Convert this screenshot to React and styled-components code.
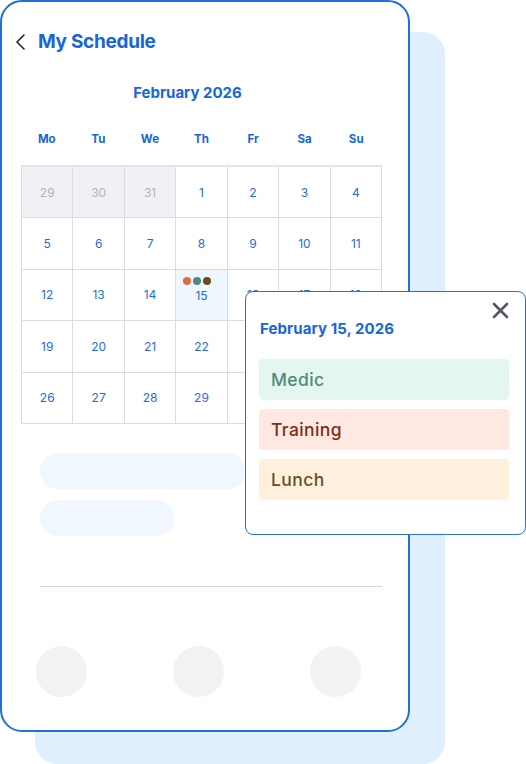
import React from "react";
import styled, { createGlobalStyle } from "styled-components";

const Global = createGlobalStyle`
  html, body { margin: 0; padding: 0; background: #ffffff; }
  body { font-family: Inter, "Open Sans", Arial, sans-serif; }
  * { box-sizing: border-box; }
`;

const BLUE = "#1766d9";

const Stage = styled.div`
  position: relative;
  width: 526px;
  height: 764px;
  overflow: hidden;
`;

const BackCard = styled.div`
  position: absolute;
  left: 35px;
  top: 32px;
  width: 410px;
  height: 732px;
  border-radius: 22px;
  background: #e0effd;
`;

const Phone = styled.div`
  position: relative;
  z-index: 1;
  width: 410px;
  height: 732px;
  border: 2px solid #1f6fe0;
  border-radius: 22px;
  background: #ffffff;
  display: flex;
  flex-direction: column;
  padding: 28px 26px 0 19px;
`;

const Header = styled.div`
  display: flex;
  align-items: center;
  gap: 10px;
  height: 24px;
  margin-left: -7px;
`;

const Title = styled.h1`
  margin: 0;
  font-size: 19px;
  line-height: 24px;
  font-weight: 700;
  color: ${BLUE};
  letter-spacing: -0.3px;
`;

const Month = styled.div`
  margin-top: 29px;
  padding-right: 28px;
  text-align: center;
  font-size: 15px;
  line-height: 20px;
  font-weight: 700;
  color: ${BLUE};
`;

const WeekRow = styled.div`
  margin-top: 29px;
  display: grid;
  grid-template-columns: repeat(7, 1fr);
  width: 361px;
`;

const WeekDay = styled.div`
  text-align: center;
  font-size: 11.5px;
  line-height: 14px;
  font-weight: 700;
  color: ${BLUE};
`;

const Grid = styled.div`
  margin-top: 19px;
  width: 361px;
  display: grid;
  grid-template-columns: repeat(7, 1fr);
  grid-auto-rows: 50.4px;
  gap: 1px;
  background: #dcdbe3;
  border: 1px solid #dcdbe3;
  border-top-width: 2px;
  border-top-color: #e4e4ea;
`;

const Cell = styled.div`
  position: relative;
  display: flex;
  align-items: center;
  justify-content: center;
  font-size: 12px;
  color: ${(p) => (p.$muted ? "#b3b3b8" : "#1f6bd8")};
  background: ${(p) => (p.$muted ? "#f0f1f5" : p.$active ? "#eef6fe" : "#ffffff")};
  padding-top: ${(p) => (p.$active ? "2px" : "0")};
`;

const Dots = styled.div`
  position: absolute;
  top: 7px;
  left: 50%;
  transform: translateX(calc(-50% - 4px));
  display: flex;
  gap: 2px;
`;

const Dot = styled.span`
  width: 8px;
  height: 8px;
  border-radius: 50%;
  background: ${(p) => p.$c};
`;

const Bar = styled.div`
  margin-left: 19px;
  width: ${(p) => p.$w}px;
  height: 36px;
  border-radius: 18px;
  background: #f0f7fe;
  margin-top: ${(p) => p.$mt}px;
`;

const Divider = styled.div`
  margin: 50px 0 0 19px;
  width: 342px;
  height: 1px;
  background: #d8d8d8;
`;

const CircleRow = styled.div`
  margin: 59px 0 0 15px;
  width: 325px;
  display: flex;
  justify-content: space-between;
`;

const Circle = styled.div`
  width: 51px;
  height: 51px;
  border-radius: 50%;
  background: #f2f2f2;
`;

const Popup = styled.div`
  position: absolute;
  z-index: 2;
  left: 245px;
  top: 291px;
  width: 281px;
  height: 244px;
  background: #ffffff;
  border: 1px solid #2a6fd6;
  border-radius: 8px;
  padding: 28px 16px 0 13px;
  display: flex;
  flex-direction: column;
`;

const Close = styled.button`
  position: absolute;
  top: 10px;
  right: 16px;
  width: 17px;
  height: 17px;
  padding: 0;
  border: 0;
  background: none;
  display: flex;
  align-items: center;
  justify-content: center;
`;

const PopTitle = styled.div`
  margin-left: 1px;
  font-size: 15px;
  line-height: 18px;
  font-weight: 700;
  color: ${BLUE};
  letter-spacing: 0.1px;
`;

const Events = styled.div`
  margin-top: 21px;
  display: flex;
  flex-direction: column;
  gap: 9px;
`;

const Event = styled.div`
  height: 41px;
  border-radius: 4px;
  background: ${(p) => p.$bg};
  color: ${(p) => p.$fg};
  display: flex;
  align-items: center;
  padding-left: 12px;
  font-size: 17.5px;
  font-weight: 500;
  letter-spacing: 0.4px;
`;

const weekdays = ["Mo", "Tu", "We", "Th", "Fr", "Sa", "Su"];
const days = [
  { d: 29, m: true }, { d: 30, m: true }, { d: 31, m: true },
  ...Array.from({ length: 29 }, (_, i) => ({ d: i + 1 })),
];

export default function App() {
  return (
    <>
      <Global />
      <Stage>
        <BackCard />
        <Phone>
          <Header>
            <svg width="14" height="20" viewBox="0 0 14 20">
              <path d="M10 3 L3 10 L10 17" fill="none" stroke="#1f2430" strokeWidth="1.6" strokeLinecap="round" strokeLinejoin="round" />
            </svg>
            <Title>My Schedule</Title>
          </Header>
          <Month>February 2026</Month>
          <WeekRow>
            {weekdays.map((w) => (
              <WeekDay key={w}>{w}</WeekDay>
            ))}
          </WeekRow>
          <Grid>
            {days.map((x, i) => (
              <Cell key={i} $muted={x.m} $active={!x.m && x.d === 15}>
                {!x.m && x.d === 15 && (
                  <Dots>
                    <Dot $c="#e06a43" />
                    <Dot $c="#4d8a7c" />
                    <Dot $c="#6b4c22" />
                  </Dots>
                )}
                {x.d}
              </Cell>
            ))}
            {[0, 1, 2].map((i) => (
              <Cell key={"e" + i} />
            ))}
          </Grid>
          <Bar $w={205} $mt={29} />
          <Bar $w={134} $mt={11} />
          <Divider />
          <CircleRow>
            <Circle />
            <Circle />
            <Circle />
          </CircleRow>
        </Phone>
        <Popup>
          <Close aria-label="close">
            <svg width="17" height="17" viewBox="0 0 17 17">
              <path d="M2 2 L15 15 M15 2 L2 15" stroke="#585466" strokeWidth="2.6" strokeLinecap="round" />
            </svg>
          </Close>
          <PopTitle>February 15, 2026</PopTitle>
          <Events>
            <Event $bg="#e3f7f0" $fg="#4e8a78">Medic</Event>
            <Event $bg="#fee8e1" $fg="#7a2e1a">Training</Event>
            <Event $bg="#fff0dd" $fg="#6b4d22">Lunch</Event>
          </Events>
        </Popup>
      </Stage>
    </>
  );
}
